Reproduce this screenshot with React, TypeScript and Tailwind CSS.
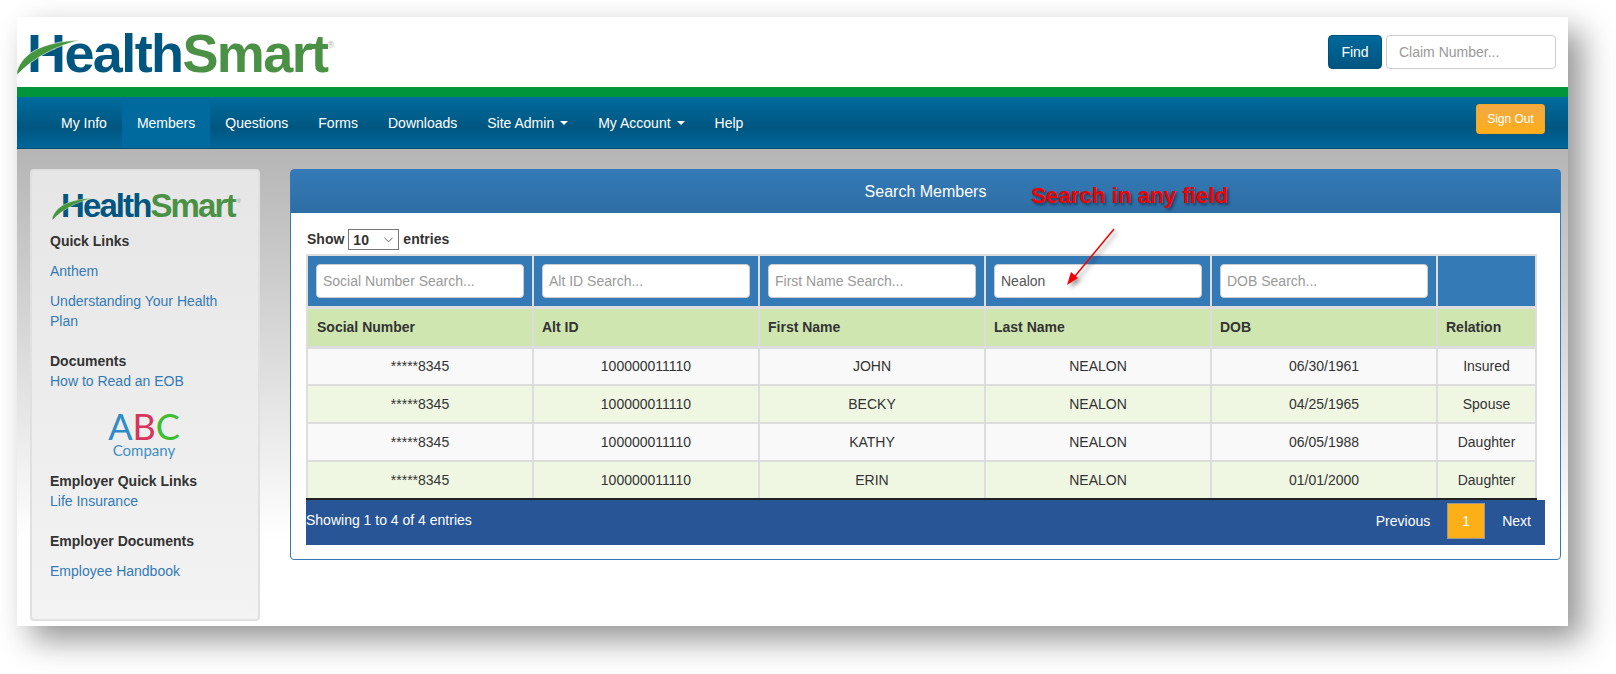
import React from "react";

const navItems = ["My Info", "Members", "Questions", "Forms", "Downloads", "Site Admin", "My Account", "Help"];
const filters = ["Social Number Search...", "Alt ID Search...", "First Name Search...", "", "DOB Search..."];
const columns = ["Social Number", "Alt ID", "First Name", "Last Name", "DOB", "Relation"];
const rows = [
  ["*****8345", "100000011110", "JOHN", "NEALON", "06/30/1961", "Insured"],
  ["*****8345", "100000011110", "BECKY", "NEALON", "04/25/1965", "Spouse"],
  ["*****8345", "100000011110", "KATHY", "NEALON", "06/05/1988", "Daughter"],
  ["*****8345", "100000011110", "ERIN", "NEALON", "01/01/2000", "Daughter"],
];

function Logo({ small }: { small?: boolean }) {
  return (
    <div className={small ? "relative h-[32px] w-[190px] pl-[9px]" : "relative h-[70px] w-[320px] pl-[10px]"}>
      <div
        className={
          small
            ? "whitespace-nowrap text-[33px] leading-[22px] font-bold tracking-[-1.9px]"
            : "whitespace-nowrap text-[54px] leading-[56px] font-bold tracking-[-1.6px]"
        }
      >
        <span className="text-[#00567f]">Health</span>
        <span className="text-[#4a9146]">Smart</span>
        <span className={small ? "ml-[2px] align-[14px] text-[6px] font-normal tracking-normal text-[#999]" : "align-[24px] text-[9px] font-normal tracking-normal text-[#aaa]"}>®</span>
      </div>
      <svg
        viewBox="0 0 64 38"
        className={small ? "absolute top-[7px] left-0 h-[24px] w-[41px]" : "absolute top-[21px] left-0 h-[38px] w-[64px]"}
      >
        <path d="M0 33 C6 15 25 4 63 2 C40 8 18 18 0 37 Z" fill="#46963f" stroke="#fff" strokeWidth="0.6" />
      </svg>
    </div>
  );
}

function Caret() {
  return <span className="ml-[6px] inline-block border-x-[4px] border-t-[4px] border-x-transparent border-t-white align-middle" />;
}

function Sidebar() {
  return (
    <aside className="h-[452px] w-[230px] shrink-0 rounded border-2 border-[#e0e0e0] bg-linear-to-b from-[#e6e6e6] to-[#f3f3f3] pt-[19px] text-[14px] leading-[20px]">
      <div className="ml-[20px]">
        <Logo small />
      </div>
      <div className="mt-[9px] pr-[20px] pl-[18px]">
        <div className="font-bold text-[#333]">Quick Links</div>
        <a className="mt-[10px] block text-[#337ab7]">Anthem</a>
        <a className="mt-[10px] block text-[#337ab7]">Understanding Your Health Plan</a>
        <div className="mt-[20px] font-bold text-[#333]">Documents</div>
        <a className="block text-[#337ab7]">How to Read an EOB</a>
        <div className="mt-[20px] flex h-[50px] flex-col items-center font-['Lato',sans-serif]">
          <div className="flex text-[36px] leading-[30px]">
            <span className="text-[#2e8bc6]">A</span>
            <span className="text-[#d9345d]">B</span>
            <span className="text-[#3dbe2f]">C</span>
          </div>
          <div className="text-[15px] leading-[18px] text-[#3f8fc4]">Company</div>
        </div>
        <div className="mt-[10px] font-bold text-[#333]">Employer Quick Links</div>
        <a className="block text-[#337ab7]">Life Insurance</a>
        <div className="mt-[20px] font-bold text-[#333]">Employer Documents</div>
        <a className="mt-[10px] block text-[#337ab7]">Employee Handbook</a>
      </div>
    </aside>
  );
}

function MembersTable() {
  return (
    <table className="w-[1231px] table-fixed border-collapse text-[14px] text-[#333]">
      <colgroup>
        <col className="w-[226px]" />
        <col className="w-[226px]" />
        <col className="w-[226px]" />
        <col className="w-[226px]" />
        <col className="w-[226px]" />
        <col />
      </colgroup>
      <thead>
        <tr className="h-[52px] bg-[#337ab7]">
          {filters.map((placeholder, index) => (
            <th key={index} className="border-2 border-b-[3px] border-[#ddd] px-[8px] font-normal">
              <input
                placeholder={placeholder}
                defaultValue={index === 3 ? "Nealon" : undefined}
                className="block h-[34px] w-full rounded border border-[#ccc] bg-white px-[6px] text-[#555] outline-none placeholder:text-[#999]"
              />
            </th>
          ))}
          <th className="border-2 border-b-[3px] border-[#ddd]" />
        </tr>
        <tr className="h-[40px] bg-[#d0e6b1]">
          {columns.map((column, index) => (
            <th
              key={column}
              className={
                index === 0
                  ? "border-x-2 border-b-[3px] border-[#ddd] pr-[8px] pl-[9px] text-left font-bold"
                  : "border-x-2 border-b-[3px] border-[#ddd] px-[8px] text-left font-bold"
              }
            >
              {column}
            </th>
          ))}
        </tr>
      </thead>
      <tbody>
        {rows.map((row, rowIndex) => (
          <tr key={row[2]} className={rowIndex % 2 === 0 ? "h-[38px] bg-[#f9f9f9]" : "h-[38px] bg-[#eff7e3]"}>
            {row.map((cell, cellIndex) => (
              <td
                key={cellIndex}
                className={
                  rowIndex === 3
                    ? "border-x-2 border-b-2 border-x-[#ddd] border-b-[#222] text-center"
                    : "border-x-2 border-b-2 border-[#ddd] text-center"
                }
              >
                {cell}
              </td>
            ))}
          </tr>
        ))}
      </tbody>
    </table>
  );
}

function SearchPanel() {
  return (
    <section className="relative ml-[30px] h-[391px] w-[1271px] shrink-0 rounded border border-[#337ab7] bg-white text-[14px]">
      <div className="flex h-[43px] items-center justify-center bg-linear-to-b from-[#337ab7] to-[#2e6da4] pt-[1px] text-[16px] text-white">
        Search Members
      </div>
      <div className="px-[15px]">
        <div className="flex h-[41px] items-center gap-[4px] pt-[12px] pl-[1px] font-bold text-[#333]">
          <span>Show</span>
          <div className="relative h-[21px] w-[51px]">
            <select className="h-full w-full appearance-none border border-[#767676] bg-white pl-[4px] text-[14px] font-bold">
              <option>10</option>
            </select>
            <svg viewBox="0 0 10 6" className="absolute top-[8px] right-[6px] h-[6px] w-[9px]" fill="none" stroke="#555" strokeWidth="1">
              <path d="M0.5 0.5 L5 5 L9.5 0.5" />
            </svg>
          </div>
          <span>entries</span>
        </div>
        <MembersTable />
        <div className="flex h-[45px] w-[1239px] items-start justify-between bg-[#285596] text-white">
          <div className="pt-[10px]">Showing 1 to 4 of 4 entries</div>
          <div className="flex items-center pt-[3px] pr-[14px]">
            <span>Previous</span>
            <span className="mx-[17px] flex h-[36px] w-[38px] items-center justify-center border border-[#999] bg-[#fcaf17]">1</span>
            <span>Next</span>
          </div>
        </div>
      </div>
      {/* annotation over the screenshot */}
      <div className="absolute top-[12px] left-[740px] text-[22.3px] leading-[28px] font-bold whitespace-nowrap text-[#f40000] [text-shadow:2px_2px_3px_rgba(0,0,0,0.45)]">
        Search in any field
      </div>
      <svg viewBox="0 0 52 60" className="absolute top-[57px] left-[774px] h-[60px] w-[52px] drop-shadow-[3px_3px_2px_rgba(0,0,0,0.4)]">
        <line x1="49" y1="2" x2="6" y2="54" stroke="#f40000" strokeWidth="1.5" />
        <path d="M2 58 L6 45 L13 51 Z" fill="#f40000" />
      </svg>
    </section>
  );
}

export default function App() {
  return (
    <div className="h-[674px] w-[1616px] overflow-hidden bg-white pt-[17px] pl-[17px] font-['Liberation_Sans',Arial,sans-serif]">
      <div className="flex h-[609px] w-[1551px] flex-col bg-white shadow-[14px_14px_30px_rgba(0,0,0,0.42)]">
        <header className="flex h-[70px] shrink-0 justify-between">
          <Logo />
          <div className="flex gap-[4px] pt-[18px] pr-[12px] text-[14px]">
            <button className="h-[34px] w-[54px] rounded border border-[#00507a] bg-linear-to-b from-[#00699b] to-[#005580] text-white">Find</button>
            <input
              placeholder="Claim Number..."
              className="h-[34px] w-[170px] rounded border border-[#ccc] bg-white px-[12px] placeholder:text-[#999]"
            />
          </div>
        </header>
        <div className="h-[10px] shrink-0 bg-[#00953b]" />
        <nav className="flex h-[52px] shrink-0 justify-between border-b border-[#004f75] bg-linear-to-b from-[#006c9f] via-[#005680] via-60% to-[#00679a] pl-[29px] text-[14px] text-white">
          <ul className="flex">
            {navItems.map((item) => (
              <li key={item} className={item === "Members" ? "flex items-center bg-[#006a9e] px-[15px] pt-[1px]" : "flex items-center px-[15px] pt-[1px]"}>
                {item}
                {(item === "Site Admin" || item === "My Account") && <Caret />}
              </li>
            ))}
          </ul>
          <div className="pt-[7px] pr-[23px]">
            <button className="h-[30px] w-[69px] rounded-[3px] border border-[#f5a623] bg-linear-to-b from-[#f2a93f] to-[#fbae17] text-[12px] text-white">Sign Out</button>
          </div>
        </nav>
        <main className="flex flex-1 bg-linear-to-b from-[#b5b5b5] to-white to-[82%] pt-[20px] pl-[13px]">
          <Sidebar />
          <SearchPanel />
        </main>
      </div>
    </div>
  );
}
